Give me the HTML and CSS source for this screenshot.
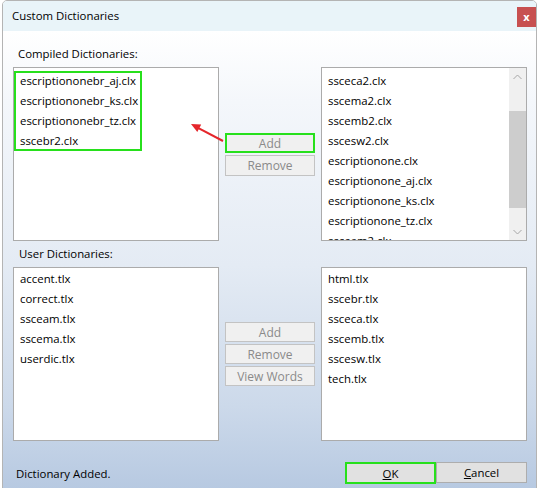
FILE: index.html
```html
<!DOCTYPE html>
<html>
<head>
<meta charset="utf-8">
<link rel="stylesheet" href="styles.css">
</head>
<body>
<div class="window">
  <div class="titlebar">
    <span class="title">Custom Dictionaries</span>
    <div class="close">x</div>
  </div>
  <div class="body">
    <div class="label">Compiled Dictionaries:</div>
    <div class="row">
      <div class="list">
        <div class="picked">
          <div class="item">escriptiononebr_aj.clx</div>
          <div class="item">escriptiononebr_ks.clx</div>
          <div class="item">escriptiononebr_tz.clx</div>
          <div class="item">sscebr2.clx</div>
        </div>
      </div>
      <div class="mid mid-top">
        <div class="btn hl">Add</div>
        <div class="btn">Remove</div>
      </div>
      <div class="list scrolled">
        <div class="items">
          <div class="item">ssceca2.clx</div>
          <div class="item">sscema2.clx</div>
          <div class="item">sscemb2.clx</div>
          <div class="item">sscesw2.clx</div>
          <div class="item">escriptionone.clx</div>
          <div class="item">escriptionone_aj.clx</div>
          <div class="item">escriptionone_ks.clx</div>
          <div class="item">escriptionone_tz.clx</div>
          <div class="item">ssceam2.clx</div>
        </div>
        <div class="vscroll">
          <div class="arrow">
            <svg width="9" height="6" viewBox="0 0 9 6"><polyline points="0.5,5 4.5,1 8.5,5" fill="none" stroke="#a6a6a6" stroke-width="1"/></svg>
          </div>
          <div class="track"><div class="thumb"></div></div>
          <div class="arrow">
            <svg width="9" height="6" viewBox="0 0 9 6"><polyline points="0.5,1 4.5,5 8.5,1" fill="none" stroke="#a6a6a6" stroke-width="1"/></svg>
          </div>
        </div>
      </div>
    </div>
    <div class="label label-user">User Dictionaries:</div>
    <div class="row">
      <div class="list list-user">
        <div class="items">
          <div class="item">accent.tlx</div>
          <div class="item">correct.tlx</div>
          <div class="item">ssceam.tlx</div>
          <div class="item">sscema.tlx</div>
          <div class="item">userdic.tlx</div>
        </div>
      </div>
      <div class="mid mid-bottom">
        <div class="btn">Add</div>
        <div class="btn">Remove</div>
        <div class="btn">View Words</div>
      </div>
      <div class="list list-user">
        <div class="items">
          <div class="item">html.tlx</div>
          <div class="item">sscebr.tlx</div>
          <div class="item">ssceca.tlx</div>
          <div class="item">sscemb.tlx</div>
          <div class="item">sscesw.tlx</div>
          <div class="item">tech.tlx</div>
        </div>
      </div>
    </div>
    <div class="footer">
      <div class="status">Dictionary Added.</div>
      <div class="actions">
        <div class="dlg-btn ok"><span class="ok-inner"><u>O</u>K</span></div>
        <div class="dlg-btn"><u>C</u>ancel</div>
      </div>
    </div>
  </div>
  <svg class="annot-arrow" width="44" height="30" viewBox="184 118 44 30">
    <line x1="222" y1="141" x2="197" y2="127.8" stroke="#e5262b" stroke-width="2"/>
    <polygon points="190,124 200.2,124.6 196.3,132" fill="#e5262b"/>
  </svg>
</div>
</body>
</html>
```

FILE: styles.css
```css
* { box-sizing: border-box; }

body {
  margin: 0;
  background: #ffffff;
  font-family: "Open Sans", "Noto Sans", sans-serif;
  font-size: 11.4px;
  color: #000;
}

.window {
  position: relative;
  margin-left: 2px;
  width: 535px;
  height: 500px;
  border: 1px solid #b4b4b4;
  border-radius: 5px 5px 0 0;
  overflow: hidden;
}

.titlebar {
  height: 30px;
  background: #e9f4f9;
  display: flex;
  justify-content: space-between;
  align-items: center;
  padding-left: 9px;
}

.title {
  line-height: 16px;
}

.close {
  align-self: flex-start;
  margin-top: 6px;
  width: 19px;
  height: 20px;
  background: #c75050;
  color: #fff;
  font-weight: bold;
  font-size: 11px;
  line-height: 19px;
  text-align: center;
}

.body {
  height: 469px;
  padding: 15px 9px 0 10px;
  background: linear-gradient(to bottom, #ffffff 0%, #f4f7fb 15%, #e4ebf4 50%, #ccd9ea 80%, #b4c7e0 100%);
}

.label {
  line-height: 16px;
  padding-left: 5px;
  margin-bottom: 5px;
}

.label-user {
  margin-top: 5px;
  padding-left: 6px;
}

.row {
  display: flex;
  gap: 6px;
  height: 174px;
}

.list {
  width: 206px;
  height: 174px;
  border: 1px solid #ababab;
  background: #fff;
  padding-top: 3px;
  overflow: hidden;
}

.list-user {
  padding-top: 1px;
}

.picked {
  width: 128px;
  margin-top: 1px;
  box-shadow: inset 0 0 0 2px #27e01c;
}

.item {
  height: 20px;
  line-height: 20px;
  padding-left: 6px;
  white-space: nowrap;
}

.picked .item:first-child { margin-top: -1px; }

.scrolled {
  display: flex;
  padding-top: 0;
}

.scrolled .items {
  flex: 1;
  padding-top: 3px;
}

.vscroll {
  width: 17px;
  background: #f0f0f0;
  display: flex;
  flex-direction: column;
}

.arrow {
  height: 17px;
  display: flex;
  align-items: center;
  justify-content: center;
}

.track {
  flex: 1;
  padding-top: 26px;
}

.thumb {
  height: 97px;
  background: #cdcdcd;
}

.mid {
  width: 90px;
  display: flex;
  flex-direction: column;
  gap: 2px;
}

.mid-top { padding-top: 66px; }
.mid-bottom { padding-top: 55px; }

.btn {
  height: 20px;
  border: 1px solid #c3c3c3;
  background: #f0f0f0;
  color: #8a8a8a;
  font-size: 12px;
  display: flex;
  align-items: center;
  justify-content: center;
}

.mid-top .btn:last-child { height: 21px; }

.btn.hl {
  border: 2px solid #27e01c;
}

.footer {
  display: flex;
  justify-content: space-between;
  align-items: center;
  padding-top: 21px;
}

.status {
  padding-left: 3px;
}

.actions {
  display: flex;
}

.dlg-btn {
  width: 91px;
  height: 21px;
  border: 1px solid #adadad;
  background: #e1e1e1;
  display: flex;
  align-items: center;
  justify-content: center;
}

.dlg-btn.ok {
  border: 2px solid #27e01c;
  height: 22px;
}

.ok-inner {
  display: block;
}

.annot-arrow {
  position: absolute;
  left: 182px;
  top: 117px;
}
```
